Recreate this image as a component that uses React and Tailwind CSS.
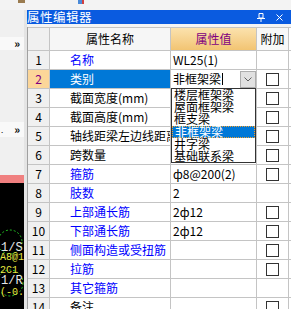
import React from 'react';

const rows = [
  { n: 1, name: '名称', blue: true, value: 'WL25(1)' },
  { n: 2, name: '类别', sel: true, cb: true },
  { n: 3, name: '截面宽度(mm)', cb: true },
  { n: 4, name: '截面高度(mm)', cb: true },
  { n: 5, name: '轴线距梁左边线距离(mm)', cb: true },
  { n: 6, name: '跨数量', cb: true },
  { n: 7, name: '箍筋', blue: true, value: 'ф8@200(2)', cb: true },
  { n: 8, name: '肢数', blue: true, value: '2' },
  { n: 9, name: '上部通长筋', blue: true, value: '2ф12', cb: true },
  { n: 10, name: '下部通长筋', blue: true, value: '2ф12', cb: true },
  { n: 11, name: '侧面构造或受扭筋', blue: true, cb: true },
  { n: 12, name: '拉筋', blue: true, cb: true },
  { n: 13, name: '其它箍筋', blue: true },
  { n: 14, name: '备注', cb: true },
];

const options = ['楼层框架梁', '屋面框架梁', '框支梁', '非框架梁', '井字梁', '基础联系梁'];

function Checkbox() {
  return <div className="w-[13px] h-[13px] border border-[#333] bg-white" />;
}

function Row({ r }) {
  return (
    <div className="flex h-[19px] shrink-0 border-b border-[#c4c4c4]">
      <div
        className={`w-[22px] shrink-0 border-r border-[#c4c4c4] flex items-center justify-center ${
          r.sel ? 'bg-[#fcd699] text-[#800080]' : 'bg-[#f0f0f0] text-black'
        }`}
      >
        {r.n}
      </div>
      <div
        className={`w-[121px] shrink-0 border-r border-[#c4c4c4] flex items-center pl-[20px] overflow-hidden whitespace-nowrap ${
          r.sel ? 'bg-[#0078d7] text-white' : r.blue ? 'text-[#0000ff]' : 'text-black'
        }`}
      >
        {r.name}
      </div>
      <div className="w-[86px] shrink-0 border-r border-[#c4c4c4] flex items-center pl-[2px] overflow-hidden whitespace-nowrap">
        {r.sel ? (
          <div className="flex items-center w-full h-full">
            <span>非框架梁</span>
            <span className="w-px h-[12px] bg-black ml-[1px]" />
            <div className="ml-auto w-[16px] h-[17px] bg-[#e1e1e1] border border-[#adadad] flex items-center justify-center">
              <svg width="8" height="5" viewBox="0 0 8 5">
                <path d="M0.5 0.5 L4 4 L7.5 0.5" fill="none" stroke="#606060" strokeWidth="1" />
              </svg>
            </div>
          </div>
        ) : (
          r.value
        )}
      </div>
      <div className="w-[32px] shrink-0 border-r border-[#c4c4c4] flex items-center justify-center">
        {r.cb && <Checkbox />}
      </div>
    </div>
  );
}

export default function App() {
  return (
    <div
      className="relative w-[291px] h-[309px] overflow-hidden bg-[#f0f0f0] flex flex-col text-[12px] leading-none"
      style={{ fontFamily: '"Noto Sans CJK SC", "Noto Sans", sans-serif' }}
    >
      {/* toolbar strip */}
      <div className="h-[10px] shrink-0 bg-[#f3f3f3] flex items-start">
        <div className="ml-[18px] w-[7px] h-[3px] bg-[#9a7b4f]" />
        <div className="ml-[53px] w-[6px] h-[4px] bg-[#4a8ad8] border-r-2 border-[#d04040]" />
      </div>

      <div className="flex flex-1 min-h-0">
        {/* left dock strip */}
        <div className="w-[27px] shrink-0 flex">
          <div className="w-[24px] flex flex-col">
            <div className="h-[27px] bg-[#f0f0f0]" />
            <div className="h-[13px] bg-[#f9f9f9] flex items-center justify-end pr-[4px] text-[11px] font-bold">»</div>
            <div className="h-[72px] bg-[#f0f0f0]" />
            <div className="h-[15px] bg-[#f9f9f9] flex items-center justify-between pl-[1px] pr-[4px] text-[11px] font-bold">
              <span className="text-[8px] font-normal">.</span>
              <span>»</span>
            </div>
            <div className="h-[38px] bg-[#f0f0f0]" />
            <div className="h-[8px] bg-[#f08080]" />
            <div className="flex-1 bg-black overflow-hidden">
              <svg width="24" height="126" viewBox="0 0 24 126" className="block">
                <circle cx="10" cy="59" r="12" fill="none" stroke="#22c022" strokeWidth="1" strokeDasharray="2 2" />
                <circle cx="10" cy="100" r="13" fill="none" stroke="#22c022" strokeWidth="1" strokeDasharray="2 2" />
                <text x="1" y="68" fill="#e8e8e8" fontSize="12" fontFamily="Liberation Mono">1/S</text>
                <text x="0" y="77" fill="#e8e840" fontSize="10" fontFamily="Liberation Mono">A8@1</text>
                <text x="0" y="90" fill="#e8e840" fontSize="10" fontFamily="Liberation Mono">2C1</text>
                <text x="1" y="101" fill="#e8e8e8" fontSize="12" fontFamily="Liberation Mono">1/R</text>
                <text x="0" y="112" fill="#e8e840" fontSize="10" fontFamily="Liberation Mono">(-0.</text>
              </svg>
            </div>
          </div>
          <div className="w-[3px] bg-[#e4e4e4]" />
        </div>

        {/* property editor panel */}
        <div className="flex-1 flex flex-col min-w-0 bg-white">
          <div className="h-[14px] shrink-0 bg-[#0a5be0] flex items-center text-white">
            <span className="text-[12.5px] tracking-[0.5px]">属性编辑器</span>
            <div className="ml-auto flex items-center gap-[11px] pr-[8px]">
              <svg width="8" height="9" viewBox="0 0 8 9">
                <path d="M2 0.5 H6 V5 H2 Z M0 5.5 H8 M4 5.5 V9" fill="none" stroke="#fff" strokeWidth="1" />
              </svg>
              <svg width="7" height="7" viewBox="0 0 7 7">
                <path d="M0.5 0.5 L6.5 6.5 M6.5 0.5 L0.5 6.5" stroke="#fff" strokeWidth="1" />
              </svg>
            </div>
          </div>
          <div className="h-[3px] shrink-0 bg-[#f4f4f4]" />
          <div className="flex-1 flex flex-col border-l border-[#a0a0a0] overflow-hidden">
            {/* header */}
            <div className="flex h-[24px] shrink-0 border-t border-b border-[#c4c4c4]">
              <div className="w-[22px] shrink-0 border-r border-[#c4c4c4] bg-[#f0f0f0]" />
              <div className="w-[121px] shrink-0 border-r border-[#c4c4c4] bg-[#f6f6f6] flex items-center justify-center text-black">
                属性名称
              </div>
              <div className="w-[86px] shrink-0 border-r border-[#c4c4c4] bg-gradient-to-b from-[#fbe2ad] to-[#f2c472] flex items-center justify-center text-[#800080]">
                属性值
              </div>
              <div className="w-[32px] shrink-0 border-r border-[#c4c4c4] bg-[#f8f8f8] flex items-center justify-center text-black">
                附加
              </div>
            </div>
            {rows.map((r) => (
              <Row key={r.n} r={r} />
            ))}
          </div>
        </div>
      </div>

      {/* open dropdown list */}
      <div className="absolute left-[171px] top-[88px] w-[85px] h-[75px] bg-white border border-[#333] text-black">
        {options.map((o) => (
          <div
            key={o}
            className={`h-[12.2px] flex items-center pl-[2px] whitespace-nowrap ${
              o === '非框架梁' ? 'bg-[#0078d7] text-white border border-dotted border-[#f0a030] pl-[1px]' : ''
            }`}
          >
            {o}
          </div>
        ))}
      </div>
    </div>
  );
}
